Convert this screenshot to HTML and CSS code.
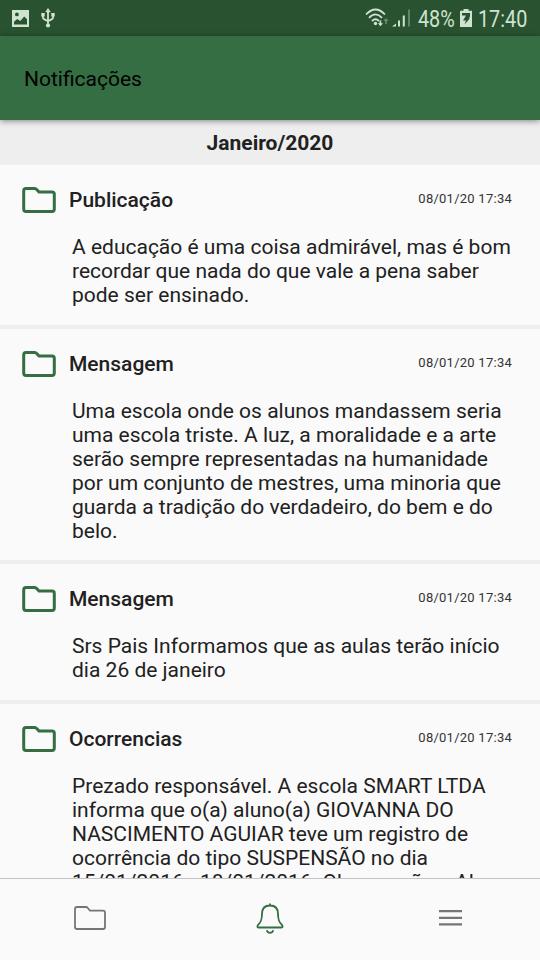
FILE: index.html
```html
<!DOCTYPE html>
<html lang="pt-br">
<head>
    <meta charset="UTF-8">
    <meta name="viewport" content="width=device-width, initial-scale=1.0">
    <title>Notificações</title>
    <link rel="stylesheet" href="styles.css">
</head>
<body>
    <svg class="defs" width="0" height="0">
        <symbol id="pasta" viewBox="0 0 34 26">
            <path d="M4 1.5H12.5Q14 1.5 15 2.8L17 5H30Q32.3 5 32.3 7.2V22Q32.3 24.5 30 24.5H4Q1.7 24.5 1.7 22V4Q1.7 1.5 4 1.5Z"/>
        </symbol>
    </svg>

    <div class="status">
        <svg class="status-img" viewBox="0 0 18 18" width="18" height="18">
            <path fill-rule="evenodd" d="M1 1H18V18H1ZM3 12.8V15.4H16V10.3L13.2 7.6L9.3 12L6.2 10ZM4 5.4A1.9 1.9 0 1 0 7.8 5.4A1.9 1.9 0 1 0 4 5.4Z"/>
        </svg>
        <svg class="status-usb" viewBox="0 0 14 20" width="14" height="20">
            <path d="M7 0L9.8 4.2H4.2ZM0.3 5H3.7V8.5H0.3ZM10.3 5H13.7V8.5H10.3Z"/>
            <circle cx="7" cy="17.5" r="2.1"/>
            <path class="line" d="M7 3V17M2 7V9.5Q2 10.8 3.5 11.4L7 13.2L10.5 11.4Q12 10.8 12 9.5V7"/>
        </svg>
        <span class="espaco"></span>
        <svg class="status-wifi" viewBox="0 0 24 20" width="24" height="20">
            <path class="line" d="M1 6.5Q10.5 -3.5 20 6.5M4 9.8Q10.5 3 17 9.8M7 13Q10.5 9.5 14 13"/>
            <circle cx="10.5" cy="15.5" r="1.7"/>
            <path d="M14.6 12.5H16.2V15.2H18L15.4 18.2L12.8 15.2H14.6Z"/>
            <path opacity=".4" d="M20.2 16H21.8V13H23.6L21 10L18.4 13H20.2Z"/>
        </svg>
        <svg class="status-sinal" viewBox="0 0 19 18" width="19" height="18">
            <path d="M0 17.5L4 14.5V17.5ZM6 11.5H8V17.5H6ZM10.8 6.5H12.8V17.5H10.8Z"/>
            <path opacity=".35" d="M16 0.5H18V17.5H16Z"/>
        </svg>
        <span class="bateria">48%</span>
        <svg class="status-bat" viewBox="0 0 12 18" width="12" height="18">
            <path d="M3.5 0H8.5V1.8H12V18H0V1.8H3.5Z"/>
            <path class="raio" d="M2 4H10V7L9 10.5L4.5 15.5L6 11.5H3L6 6.5H2Z"/>
        </svg>
        <span class="hora">17:40</span>
    </div>

    <header class="topo">Notificações</header>

    <main class="lista">
        <h2 class="mes">Janeiro/2020</h2>

        <div class="item">
            <div class="item-topo">
                <svg class="pasta"><use href="#pasta"/></svg>
                <h3>Publicação</h3>
                <span class="data">08/01/20 17:34</span>
            </div>
            <p>A educação é uma coisa admirável, mas é bom recordar que nada do que vale a pena saber pode ser ensinado.</p>
        </div>

        <div class="item">
            <div class="item-topo">
                <svg class="pasta"><use href="#pasta"/></svg>
                <h3>Mensagem</h3>
                <span class="data">08/01/20 17:34</span>
            </div>
            <p>Uma escola onde os alunos mandassem seria uma escola triste. A luz, a moralidade e a arte serão sempre representadas na humanidade por um conjunto de mestres, uma minoria que guarda a tradição do verdadeiro, do bem e do belo.</p>
        </div>

        <div class="item">
            <div class="item-topo">
                <svg class="pasta"><use href="#pasta"/></svg>
                <h3>Mensagem</h3>
                <span class="data">08/01/20 17:34</span>
            </div>
            <p>Srs Pais Informamos que as aulas terão início dia 26 de janeiro</p>
        </div>

        <div class="item">
            <div class="item-topo">
                <svg class="pasta"><use href="#pasta"/></svg>
                <h3>Ocorrencias</h3>
                <span class="data">08/01/20 17:34</span>
            </div>
            <p>Prezado responsável. A escola SMART LTDA informa que o(a) aluno(a) GIOVANNA DO NASCIMENTO AGUIAR teve um registro de ocorrência do tipo SUSPENSÃO no dia 15/01/2016 - 18/01/2016. Observação: - Al</p>
        </div>
    </main>

    <nav class="menu">
        <a><svg class="menu-pasta" viewBox="0 0 32 24" width="32" height="24">
            <path d="M3 1H12Q13 1 13.8 2L16 4.6H29Q31 4.6 31 6.6V21Q31 23 29 23H3Q1 23 1 21V3Q1 1 3 1Z"/>
        </svg></a>
        <a><svg class="menu-sino" viewBox="0 0 28 32" width="28" height="32">
            <path d="M14 3.5C8.5 3.5 6 7 6 12C6 18.5 4.5 20.5 2 23Q0.5 25.5 2.5 25.5H25.5Q27.5 25.5 26 23C23.5 20.5 22 18.5 22 12C22 7 19.5 3.5 14 3.5ZM14 1.5V3.5M10.8 28.2Q11.6 30.8 14 30.8Q16.4 30.8 17.2 28.2"/>
        </svg></a>
        <a><svg viewBox="0 0 23 16" width="23" height="16">
            <path class="barras" d="M0 1.2H23M0 7.8H23M0 14.4H23"/>
        </svg></a>
    </nav>
</body>
</html>
```
FILE: styles.css
```css
body {
    font-family: Roboto, sans-serif;
    background-color: #fafafa;
    color: #212121;
    margin: 0;
    height: 960px;
    display: flex;
    flex-direction: column;
    overflow: hidden;
}
h2, h3, p {
    margin: 0;
}
svg {
    display: block;
    flex: none;
}
.defs {
    position: absolute;
}
.status {
    height: 36px;
    flex: none;
    box-sizing: border-box;
    padding: 0 13px 0 11px;
    display: flex;
    align-items: center;
    background-color: #295230;
    color: #cfe3d1;
    fill: #cfe3d1;
    font-size: 23px;
}
.status .line {
    fill: none;
    stroke: #cfe3d1;
    stroke-width: 1.8;
}
.status-usb {
    margin-left: 12px;
}
.espaco {
    flex: 1;
}
.status-sinal {
    margin: 0 7px 0 3px;
}
.status-bat {
    margin: 0 6px 0 6px;
}
.status .raio {
    fill: #295230;
}
.bateria, .hora {
    line-height: 36px;
    padding-top: 3px;
    transform: scaleX(0.86);
    transform-origin: left;
}
.bateria {
    width: 36px;
}
.hora {
    width: 49px;
}
.topo {
    height: 84px;
    flex: none;
    line-height: 86px;
    padding-left: 24px;
    background-color: #356e42;
    color: #000;
    font-size: 21px;
    box-shadow: 0 1px 6px rgba(0, 0, 0, 0.45);
    z-index: 1;
}
.lista {
    flex: 1;
    min-height: 0;
    overflow: hidden;
}
.mes {
    height: 45px;
    line-height: 46px;
    background-color: #eee;
    text-align: center;
    font-size: 21px;
    font-weight: 700;
}
.item {
    padding: 21px 28px 17.5px 22px;
    border-bottom: 4px solid #eee;
}
.item-topo {
    display: flex;
    align-items: center;
    height: 28px;
}
.pasta {
    width: 34px;
    height: 26px;
    fill: none;
    stroke: #356e42;
    stroke-width: 3;
}
.item h3 {
    flex: 1;
    margin-left: 13px;
    font-size: 21px;
    font-weight: 500;
}
.data {
    padding-bottom: 3px;
    font-size: 13px;
    letter-spacing: 0.25px;
    color: #333;
}
.item p {
    margin: 21px -10px 0 50px;
    font-size: 21px;
    line-height: 24px;
}
.menu {
    height: 81px;
    flex: none;
    display: flex;
    border-top: 1px solid #c4c4c4;
    fill: none;
    stroke: #757575;
    stroke-width: 1.8;
}
.menu a {
    flex: 1;
    display: flex;
    align-items: center;
    justify-content: center;
    padding-bottom: 3px;
}
.menu-sino {
    stroke: #356e42;
}
.barras {
    stroke-width: 2.3;
}
```
